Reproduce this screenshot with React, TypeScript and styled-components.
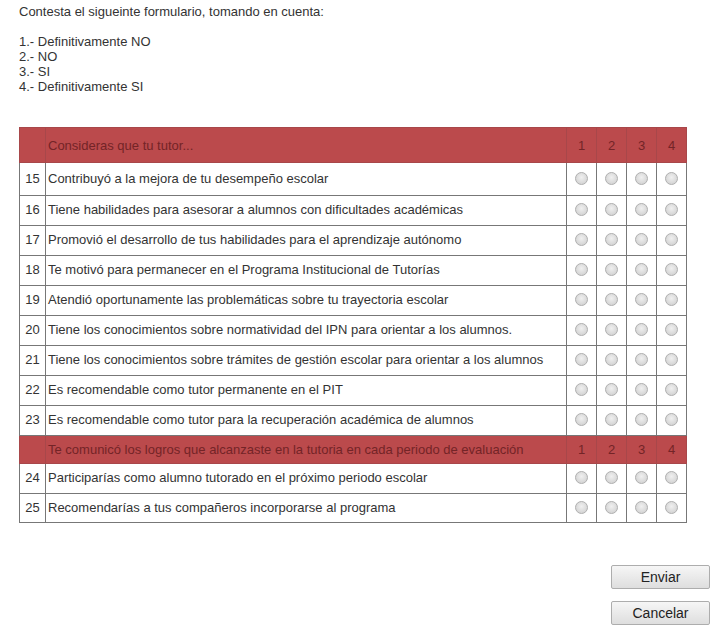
import React from "react";
import styled, { createGlobalStyle } from "styled-components";

const GlobalStyle = createGlobalStyle`
  body {
    margin: 0;
    background: #fff;
    font-family: "Liberation Sans", Arial, sans-serif;
    color: #333;
  }
`;

const Page = styled.div`
  width: 725px;
  padding: 4px 15px 12px 19px;
  box-sizing: border-box;
  font-size: 13px;
  line-height: 15px;
`;

const Intro = styled.div`
  margin-bottom: 33px;
`;

const Line = styled.div`
  min-height: 15px;
`;

const Table = styled.table`
  border-collapse: collapse;
  table-layout: fixed;
  width: 668px;
  font-size: 13px;
`;

const HeadRow = styled.tr<{ $h: number }>`
  height: ${(p) => p.$h}px;
  background: #bb4a4c;
  color: #732427;
`;

const Row = styled.tr<{ $h: number }>`
  height: ${(p) => p.$h}px;
`;

const HeadCell = styled.td<{ $center?: boolean }>`
  border: 1px solid #a8474a;
  padding: 0 2px;
  text-align: ${(p) => (p.$center ? "center" : "left")};
  white-space: nowrap;
`;

const NumCell = styled.td`
  border: 1px solid #777;
  text-align: center;
  padding: 0 0 2px;
`;

const TextCell = styled.td`
  border: 1px solid #777;
  padding: 0 2px 2px;
  white-space: nowrap;
`;

const RadioCell = styled.td`
  border: 1px solid #777;
  text-align: center;
  padding: 0;
`;

const Radio = styled.input.attrs({ type: "radio" })`
  appearance: none;
  display: inline-block;
  vertical-align: middle;
  width: 13px;
  height: 13px;
  margin: -4px 0 0 0;
  border-radius: 50%;
  border: 1px solid #b0b0b0;
  background: radial-gradient(circle at 50% 40%, #f0f0f0 0%, #dadada 60%, #cdcdcd 100%);
  box-sizing: border-box;
`;

const Actions = styled.div`
  display: flex;
  flex-direction: column;
  align-items: flex-end;
  gap: 12px;
  margin-top: 42px;
`;

const Button = styled.button`
  width: 99px;
  height: 24px;
  font-family: "Liberation Sans", Arial, sans-serif;
  font-size: 14px;
  color: #222;
  border: 1px solid #adadad;
  border-radius: 2px;
  background: linear-gradient(#f6f6f6, #dedede);
  padding: 0;
`;

type Item = { n?: number; text: string; header?: boolean; h: number };

const items: Item[] = [
  { text: "Consideras que tu tutor...", header: true, h: 35 },
  { n: 15, text: "Contribuyó a la mejora de tu desempeño escolar", h: 33 },
  { n: 16, text: "Tiene habilidades para asesorar a alumnos con dificultades académicas", h: 30 },
  { n: 17, text: "Promovió el desarrollo de tus habilidades para el aprendizaje autónomo", h: 30 },
  { n: 18, text: "Te motivó para permanecer en el Programa Institucional de Tutorías", h: 30 },
  { n: 19, text: "Atendió oportunamente las problemáticas sobre tu trayectoria escolar", h: 30 },
  { n: 20, text: "Tiene los conocimientos sobre normatividad del IPN para orientar a los alumnos.", h: 30 },
  { n: 21, text: "Tiene los conocimientos sobre trámites de gestión escolar para orientar a los alumnos", h: 30 },
  { n: 22, text: "Es recomendable como tutor permanente en el PIT", h: 30 },
  { n: 23, text: "Es recomendable como tutor para la recuperación académica de alumnos", h: 30 },
  { text: "Te comunicó los logros que alcanzaste en la tutoria en cada periodo de evaluación", header: true, h: 28 },
  { n: 24, text: "Participarías como alumno tutorado en el próximo periodo escolar", h: 30 },
  { n: 25, text: "Recomendarías a tus compañeros incorporarse al programa", h: 29 },
];

const App = () => (
  <Page>
    <GlobalStyle />
    <Intro>
      <Line>Contesta el sigueinte formulario, tomando en cuenta:</Line>
      <Line />
      <Line>1.- Definitivamente NO</Line>
      <Line>2.- NO</Line>
      <Line>3.- SI</Line>
      <Line>4.- Definitivamente SI</Line>
    </Intro>
    <Table>
      <colgroup>
        <col style={{ width: 26 }} />
        <col style={{ width: 521 }} />
        <col style={{ width: 30 }} />
        <col style={{ width: 30 }} />
        <col style={{ width: 30 }} />
        <col style={{ width: 30 }} />
      </colgroup>
      <tbody>
        {items.map((it, i) =>
          it.header ? (
            <HeadRow key={i} $h={it.h}>
              <HeadCell />
              <HeadCell>{it.text}</HeadCell>
              {[1, 2, 3, 4].map((v) => (
                <HeadCell key={v} $center>
                  {v}
                </HeadCell>
              ))}
            </HeadRow>
          ) : (
            <Row key={i} $h={it.h}>
              <NumCell>{it.n}</NumCell>
              <TextCell>{it.text}</TextCell>
              {[1, 2, 3, 4].map((v) => (
                <RadioCell key={v}>
                  <Radio name={`p${it.n}`} value={v} />
                </RadioCell>
              ))}
            </Row>
          ),
        )}
      </tbody>
    </Table>
    <Actions>
      <Button>Enviar</Button>
      <Button>Cancelar</Button>
    </Actions>
  </Page>
);

export default App;
